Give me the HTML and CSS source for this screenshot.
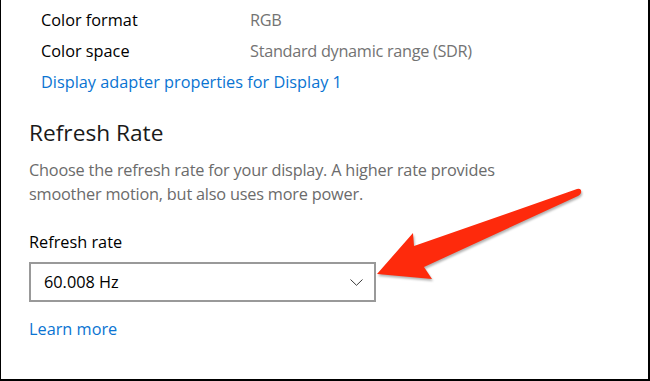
FILE: index.html
```html
<!DOCTYPE html>
<html>
<head>
<meta charset="utf-8">
<link rel="stylesheet" href="styles.css">
</head>
<body>
<div class="frame">
  <div class="props">
    <div class="prop"><span class="prop-name">Color format</span><span class="prop-value">RGB</span></div>
    <div class="prop"><span class="prop-name">Color space</span><span class="prop-value">Standard dynamic range (SDR)</span></div>
    <div class="prop"><a class="link">Display adapter properties for Display 1</a></div>
  </div>
  <section class="refresh">
    <h2 class="heading">Refresh Rate</h2>
    <p class="desc">Choose the refresh rate for your display. A higher rate provides smoother motion, but also uses more power.</p>
    <div class="field-label">Refresh rate</div>
    <div class="select">
      <span class="select-value">60.008 Hz</span>
      <svg class="chevron" width="13" height="7" viewBox="0 0 13 7"><path d="M0.5 0.5 L6.5 6.3 L12.5 0.5" fill="none" stroke="#3a3a3a" stroke-width="1"/></svg>
    </div>
    <a class="link learn">Learn more</a>
  </section>
  <svg class="arrow" width="650" height="381" viewBox="0 0 650 381">
    <path d="M377 274 L413 233 L414 246 L577 189 Q582 188 581 193 Q580 195 578 196 L424 267 L432 279 Z" fill="#fe2a0c"/>
  </svg>
</div>
</body>
</html>
```
FILE: styles.css
```css
html, body {
  margin: 0;
  padding: 0;
  background: #fff;
}
body {
  width: 650px;
  height: 381px;
  overflow: hidden;
  font-family: "Open Sans", "Noto Sans", sans-serif;
}
.frame {
  position: relative;
  box-sizing: border-box;
  width: 650px;
  height: 381px;
  border-left: 1px solid #000;
  border-right: 2px solid #000;
  border-bottom: 2px solid #000;
  padding: 4px 0 0 28px;
}
.props {
  padding-left: 12px;
  display: flex;
  flex-direction: column;
}
.prop {
  display: flex;
  height: 31px;
  align-items: center;
  font-size: 16.3px;
}
.prop-name {
  width: 209px;
  color: #000;
}
.prop-value {
  color: #737373;
  letter-spacing: -0.3px;
}
.link {
  color: #0a74d2;
  font-size: 16.3px;
}
.refresh {
  display: flex;
  flex-direction: column;
  align-items: flex-start;
}
.heading {
  margin: 21px 0 0 0;
  font-size: 22.7px;
  font-weight: normal;
  line-height: 30px;
  color: #1a1a1a;
}
.desc {
  margin: 10px 0 0 0;
  width: 490px;
  font-size: 16.3px;
  line-height: 24px;
  letter-spacing: -0.2px;
  color: #6b6b6b;
}
.field-label {
  margin-top: 25px;
  font-size: 16.3px;
  line-height: 22px;
  color: #000;
}
.select {
  margin-top: 9px;
  box-sizing: border-box;
  width: 347px;
  height: 40px;
  border: 2px solid #999;
  display: flex;
  align-items: center;
  justify-content: space-between;
  padding: 0 11px 0 13px;
}
.select-value {
  font-size: 16.3px;
  color: #000;
}
.chevron {
  display: block;
}
.learn {
  margin-top: 16px;
  line-height: 22px;
}
.arrow {
  position: absolute;
  left: -1px;
  top: 0;
  pointer-events: none;
  filter: drop-shadow(1px 2px 1px rgba(0,0,0,0.3));
}
```
